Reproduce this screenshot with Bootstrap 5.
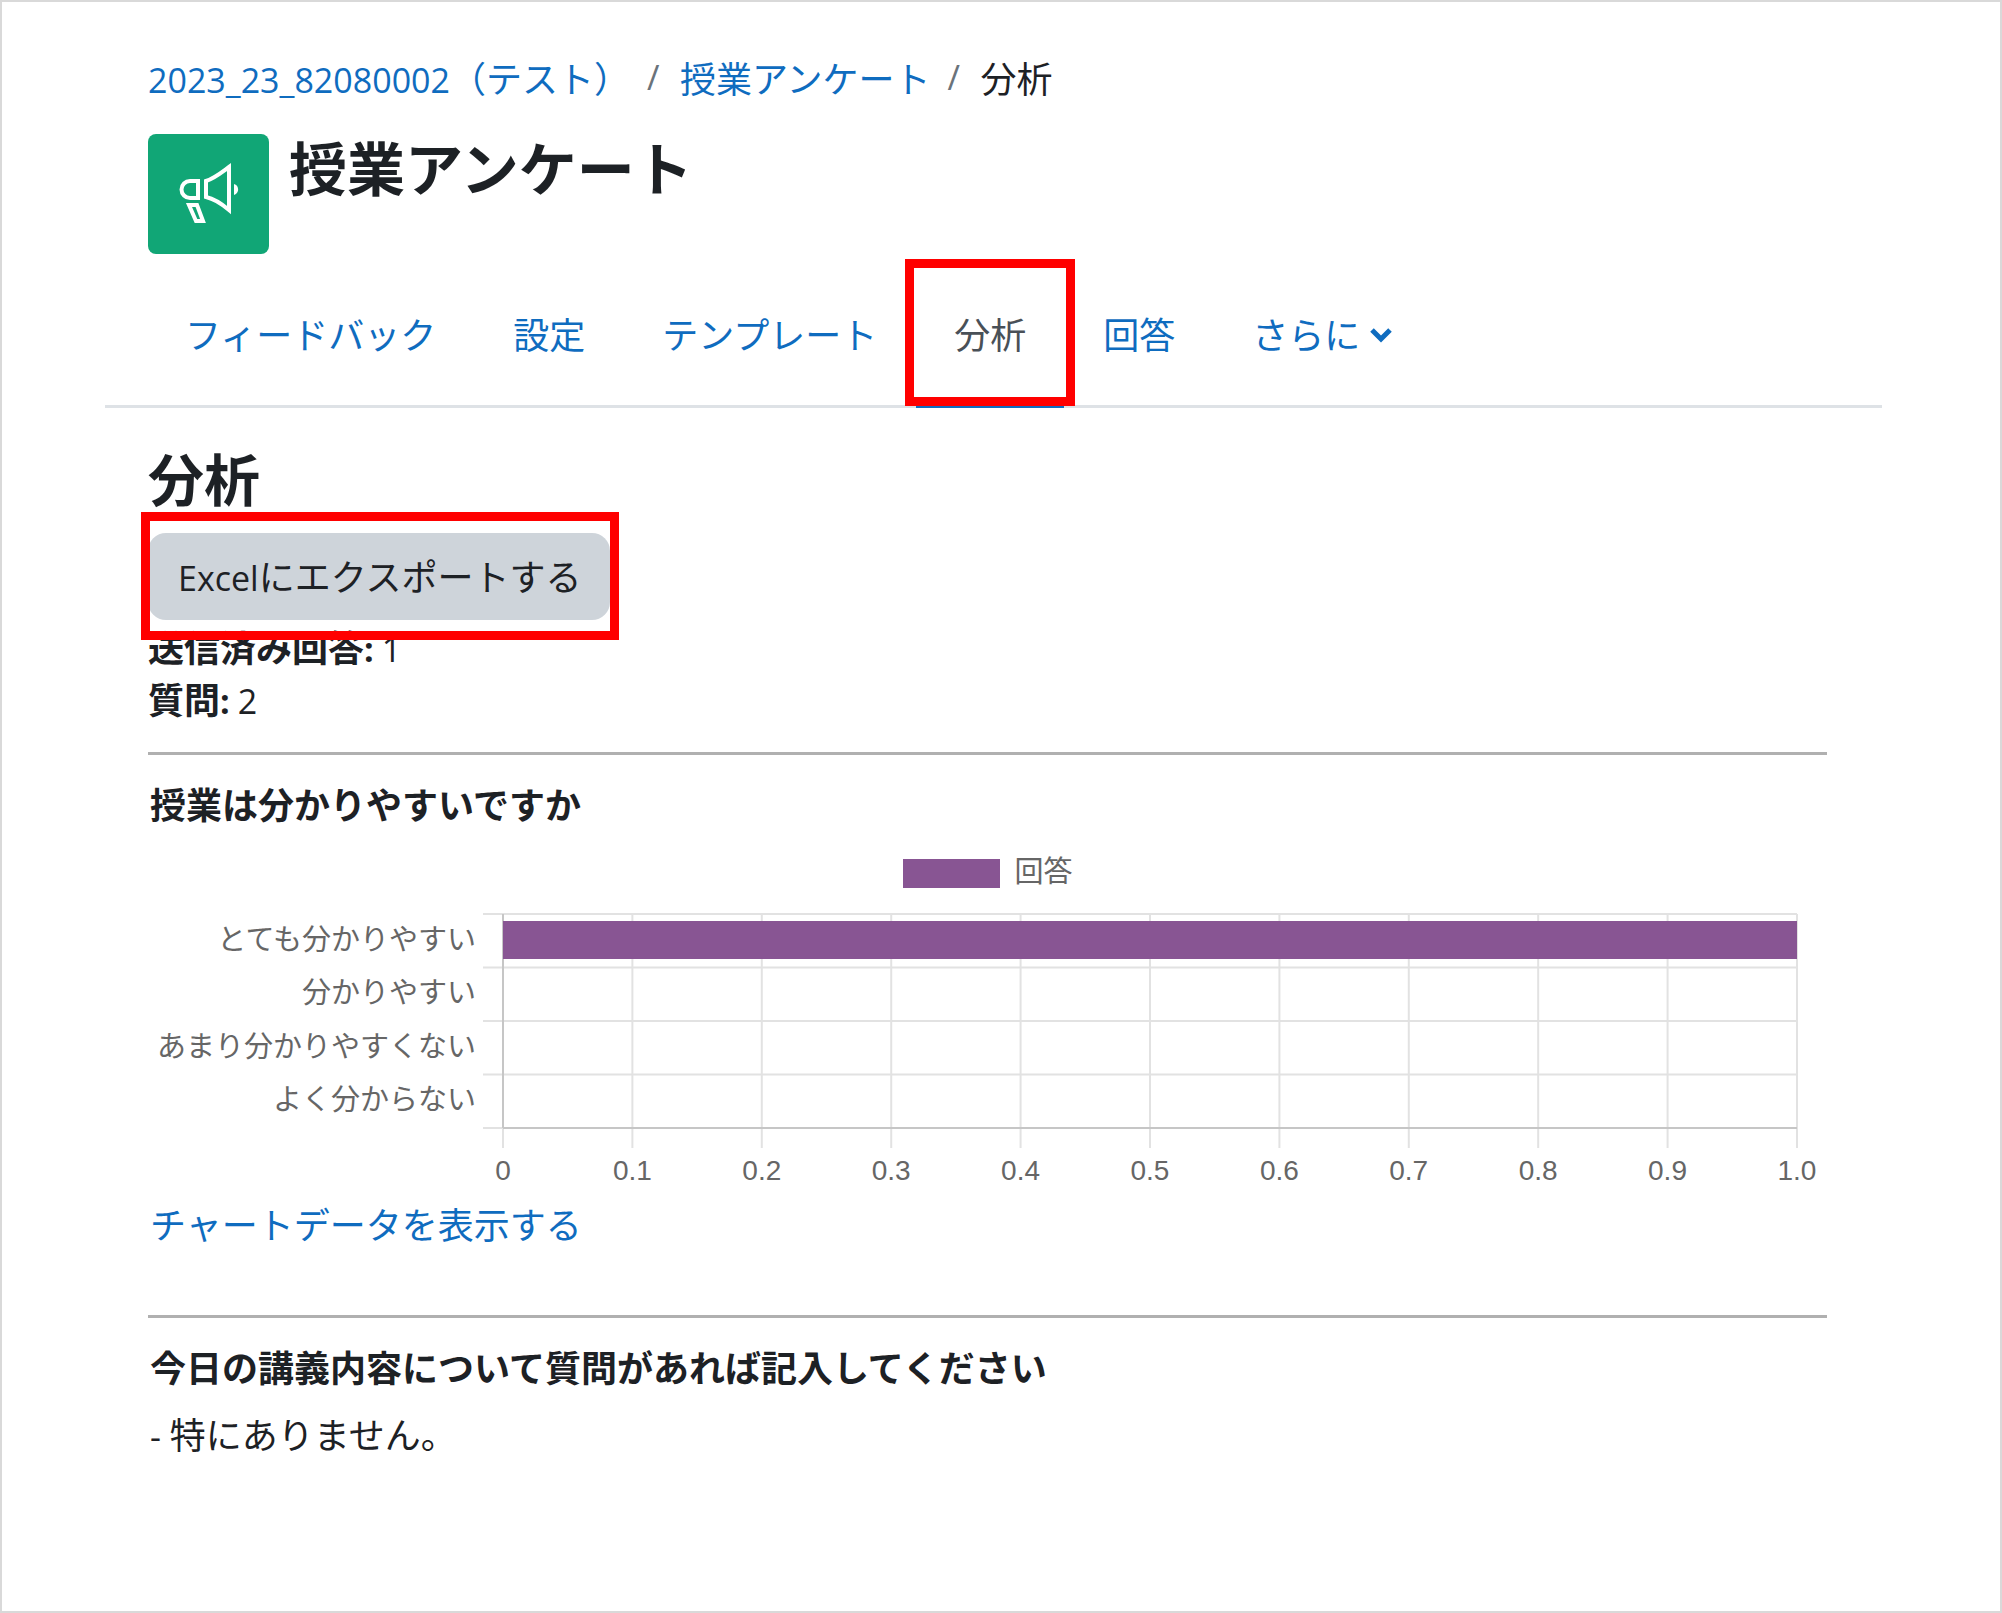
<!DOCTYPE html>
<html lang="ja">
<head>
<meta charset="utf-8">
<meta name="viewport" content="width=device-width, initial-scale=1">
<title>授業アンケート - 分析</title>
<link href="https://cdn.jsdelivr.net/npm/bootstrap@5.3.0/dist/css/bootstrap.min.css" rel="stylesheet">
<style>
body { font-family: "Noto Sans CJK JP", sans-serif; font-size: 36px; line-height: 54px; color: #1d2125; background: #fff; }
a { color: #0f6cbf; text-decoration: none; }
.page-frame { border: 2px solid #d9d9d9; padding: 48px 118px 48px 103px; }
.page-body { padding: 0 55px 0 43px; }
.latin { font-family: "Open Sans", sans-serif; font-size: 34px; line-height: 1; }
.breadcrumb { --bs-breadcrumb-item-padding-x: 18px; font-size: 36px; margin-bottom: 30px; }
.breadcrumb-item + .breadcrumb-item { padding-left: 17px; }
.breadcrumb-item + .breadcrumb-item::before { content: "/"; font-family: "Open Sans", sans-serif; font-size: 34px; color: #6a737b; width: 33px; padding: 0; }
.breadcrumb-item.active { color: #1d2125; }
.title-row { gap: 20px; }
.activity-icon { width: 121px; height: 120px; border-radius: 8px; background: #11a676; }
h1, h2 { font-weight: 700; line-height: 64px; margin: 0; }
h1 { font-size: 58px; }
h2 { font-size: 56px; padding-top: 37px; margin-bottom: 24px; }
.tab-strip { border-bottom: 3px solid #dee2e6; margin-top: 7px; padding: 0 42px; column-gap: 1px; }
.tab-strip .nav-link { color: #0f6cbf; padding: 45px 38px; border-bottom: 3px solid transparent; margin-bottom: -3px; line-height: 54px; }
.tab-strip .nav-link.active { color: #495057; border-bottom-color: #0f6cbf; }
.callout-box { position: absolute; border: 9px solid #f00; pointer-events: none; }
.callout-tab { inset: -2px -11px -1px; }
.callout-button { inset: -21px -9px -20px -7px; }
.btn-export { background: #ced4da; color: #1d2125; font-size: 36px; line-height: 53px; padding: 16px 28px 18px 30px; border: 0; border-radius: 18px; }
.summary-line { line-height: 52px; }
.section-rule { border: 0; border-top: 3px solid #b0b0b0; opacity: 1; margin: 28px 0 21px; }
.question { padding-left: 2px; }
.question h3 { font-size: 36px; line-height: 54px; font-weight: 700; margin: 0; }
.chart { color: #666; font-size: 29px; line-height: 30px; padding-right: 30px; margin-bottom: 12px; }
.legend-row { gap: 14px; margin: 19px 0 26px; padding-left: 31px; }
.legend-swatch { width: 97px; height: 29px; margin-top: 10px; background: #885593; }
.plot-grid { display: grid; grid-template-columns: 335px 1fr; grid-template-rows: 214px 56px; }
.plot-labels { padding-right: 7px; margin: -4px 0 4px; }
.plot-area, .plot-ticks { margin-left: 20px; }
.plot-area svg { display: block; width: 100%; height: 214px; overflow: visible; }
.plot-ticks { font-family: "Liberation Sans", sans-serif; font-size: 28px; padding-top: 28px; }
.plot-ticks span { width: 0; display: flex; justify-content: center; }
.chart-link { margin-bottom: 65px; }
.answer { margin-top: 13px; }
</style>
<script src="https://cdn.jsdelivr.net/npm/bootstrap@5.3.0/dist/js/bootstrap.bundle.min.js"></script>
</head>
<body>
<main class="page-frame min-vh-100">
  <header class="page-body">
    <nav aria-label="パンくず">
      <ol class="breadcrumb">
        <li class="breadcrumb-item"><a href="#"><span class="latin">2023_23_82080002</span>（テスト）</a></li>
        <li class="breadcrumb-item"><a href="#">授業アンケート</a></li>
        <li class="breadcrumb-item active" aria-current="page">分析</li>
      </ol>
    </nav>
    <div class="title-row d-flex align-items-start">
      <div class="activity-icon flex-shrink-0">
        <svg class="d-block" width="121" height="120" viewBox="0 0 121 120" fill="none" stroke="#fff" stroke-width="4" aria-hidden="true">
          <path d="M50 47v17H42a8 8 0 0 1 0-17zM58 47C67 44 74 38 81 33v43C74 70 67 65 58 63zM41 71h8l6 16h-7z"/>
          <path d="M86 50c5 1 6 9 0 11z" fill="#fff" stroke="none"/>
        </svg>
      </div>
      <h1>授業アンケート</h1>
    </div>
  </header>

  <ul class="nav tab-strip">
    <li class="nav-item"><a class="nav-link" href="#">フィードバック</a></li>
    <li class="nav-item"><a class="nav-link" href="#">設定</a></li>
    <li class="nav-item"><a class="nav-link" href="#">テンプレート</a></li>
    <li class="nav-item position-relative"><a class="nav-link active" aria-current="page" href="#">分析</a><span class="callout-box callout-tab"></span></li>
    <li class="nav-item"><a class="nav-link" href="#">回答</a></li>
    <li class="nav-item"><a class="nav-link d-flex align-items-center" href="#">さらに<svg class="ms-2 mt-1" width="26" height="18" viewBox="0 0 26 18" fill="none" stroke="#0f6cbf" stroke-width="5" aria-hidden="true"><path d="M4 4l9 9 9-9"/></svg></a></li>
  </ul>

  <div class="page-body">
    <h2>分析</h2>
    <div class="d-inline-block position-relative align-top">
      <button type="button" class="btn btn-export d-block"><span class="latin">Excel</span>にエクスポートする</button>
      <span class="callout-box callout-button"></span>
    </div>
    <div class="summary-line"><b>送信済み回答<span class="latin">:</span></b> <span class="latin">1</span></div>
    <div class="summary-line"><b>質問<span class="latin">:</span></b> <span class="latin">2</span></div>

    <hr class="section-rule">
    <section>
      <div class="question"><h3>授業は分かりやすいですか</h3></div>
      <div class="chart">
        <div class="legend-row d-flex justify-content-center align-items-center"><span class="legend-swatch"></span><span>回答</span></div>
        <div class="plot-grid">
          <div class="plot-labels d-flex flex-column justify-content-around text-end">
            <span>とても分かりやすい</span><span>分かりやすい</span><span>あまり分かりやすくない</span><span>よく分からない</span>
          </div>
          <div class="plot-area">
            <svg stroke="#e2e2e2" stroke-width="2" role="img" aria-label="回答">
              <line x1="-20" x2="100%" y1="0" y2="0"/><line x1="-20" x2="100%" y1="25%" y2="25%"/><line x1="-20" x2="100%" y1="50%" y2="50%"/><line x1="-20" x2="100%" y1="75%" y2="75%"/><line x1="-20" x2="100%" y1="100%" y2="100%"/>
              <line x1="0" x2="0" y1="0" y2="234"/><line x1="10%" x2="10%" y1="0" y2="234"/><line x1="20%" x2="20%" y1="0" y2="234"/><line x1="30%" x2="30%" y1="0" y2="234"/><line x1="40%" x2="40%" y1="0" y2="234"/><line x1="50%" x2="50%" y1="0" y2="234"/><line x1="60%" x2="60%" y1="0" y2="234"/><line x1="70%" x2="70%" y1="0" y2="234"/><line x1="80%" x2="80%" y1="0" y2="234"/><line x1="90%" x2="90%" y1="0" y2="234"/><line x1="100%" x2="100%" y1="0" y2="234"/>
              <g stroke="#c6c6c6"><line x1="0" x2="0" y1="0" y2="100%"/><line x1="0" x2="100%" y1="100%" y2="100%"/></g>
              <rect x="0" y="7" width="100%" height="38" fill="#885593" stroke="none"/>
            </svg>
          </div>
          <div></div>
          <div class="plot-ticks d-flex justify-content-between">
            <span>0</span><span>0.1</span><span>0.2</span><span>0.3</span><span>0.4</span><span>0.5</span><span>0.6</span><span>0.7</span><span>0.8</span><span>0.9</span><span>1.0</span>
          </div>
        </div>
      </div>
      <div class="question chart-link"><a href="#">チャートデータを表示する</a></div>
    </section>

    <hr class="section-rule mt-0">
    <section class="question">
      <h3>今日の講義内容について質問があれば記入してください</h3>
      <div class="answer"><span class="latin">- </span>特にありません。</div>
    </section>
  </div>
</main>
</body>
</html>
